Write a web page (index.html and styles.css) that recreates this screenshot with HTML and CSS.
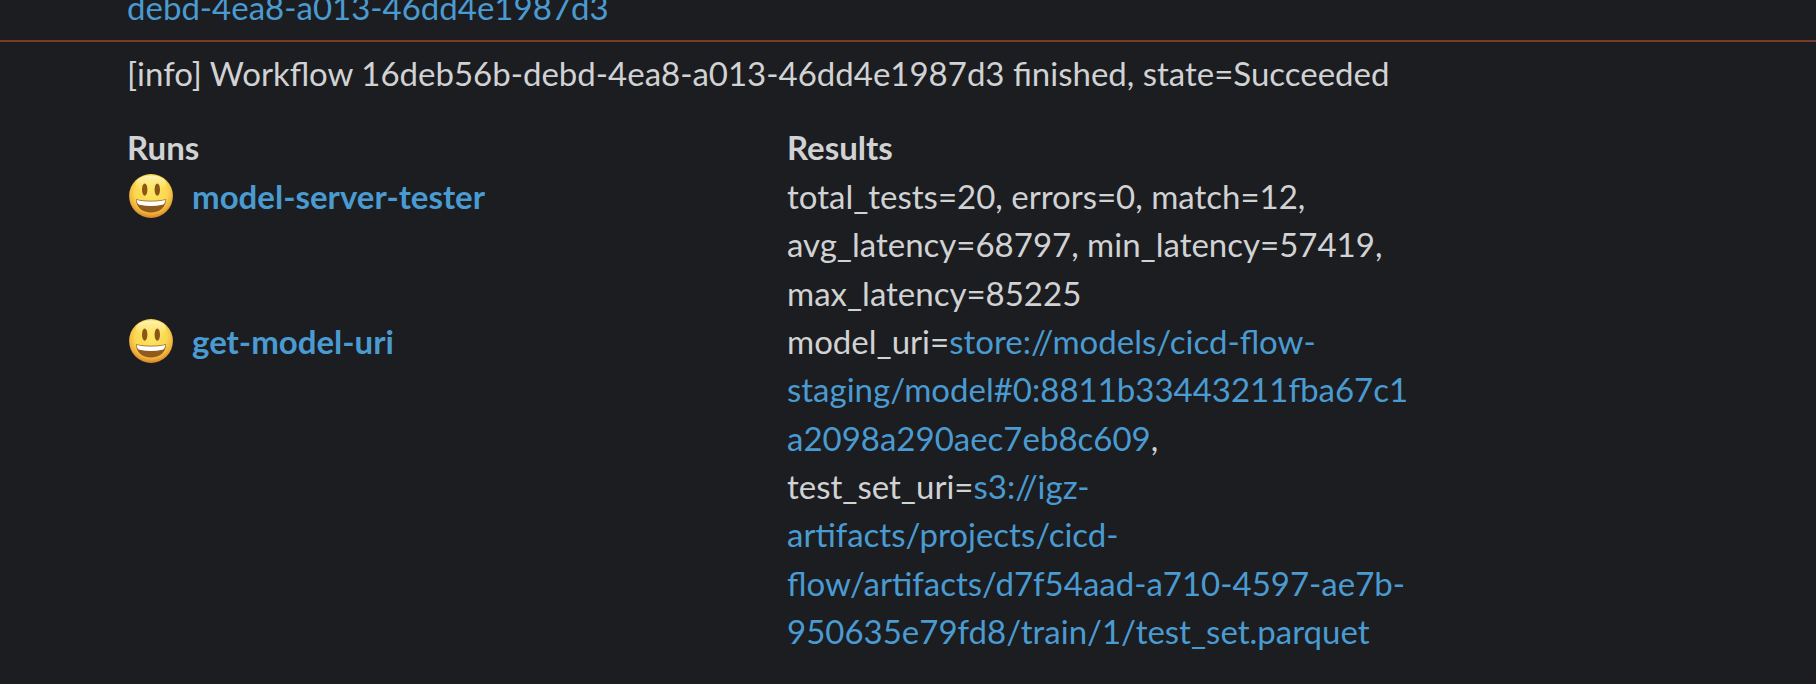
FILE: index.html
```html
<!DOCTYPE html>
<html lang="en">
<head>
<meta charset="utf-8">
<title>Workflow notifications</title>
<link rel="stylesheet" href="styles.css">
</head>
<body>
<svg class="defs" aria-hidden="true">
  <defs>
    <radialGradient id="face" cx="50%" cy="38%" r="62%">
      <stop offset="0" stop-color="#fde765"/>
      <stop offset=".6" stop-color="#fad750"/>
      <stop offset=".84" stop-color="#f0b03b"/>
      <stop offset="1" stop-color="#d58426"/>
    </radialGradient>
    <linearGradient id="shine" x1="0" y1="0" x2="0" y2="1">
      <stop offset="0" stop-color="#fffbd8" stop-opacity=".8"/>
      <stop offset="1" stop-color="#fff27e" stop-opacity="0"/>
    </linearGradient>
    <symbol id="smiley" viewBox="0 0 44 44">
      <circle cx="22" cy="22" r="21.9" fill="url(#face)"/>
      <ellipse cx="22" cy="9.5" rx="15" ry="8" fill="url(#shine)"/>
      <ellipse cx="15.7" cy="15.6" rx="2.7" ry="6.2" fill="#8a5618"/>
      <ellipse cx="28.3" cy="15.6" rx="2.7" ry="6.2" fill="#8a5618"/>
      <path d="M7 25.3Q22 28.3 37 25.3C36.8 33.5 30.5 38.5 22 38.5S7.2 33.5 7 25.3Z" fill="#8f5a1b"/>
      <path d="M7.6 25.9Q22 29 36.4 25.9Q36 30 33.5 30.7Q22 33.5 10.5 30.7Q8 30 7.6 25.9Z" fill="#fff"/>
    </symbol>
  </defs>
</svg>
<main class="log">
  <div class="message message-previous"><a class="link">debd-4ea8-a013-46dd4e1987d3</a></div>
  <section class="message">
    <p class="summary">[info] Workflow 16deb56b-debd-4ea8-a013-46dd4e1987d3 finished, state=Succeeded</p>
    <div class="fields heading"><strong>Runs</strong><strong>Results</strong></div>
    <div class="fields">
      <div class="run"><svg class="emoji"><use href="#smiley"/></svg><a class="link name">model-server-tester</a></div>
      <div class="result">total_tests=20, errors=0, match=12,<br>avg_latency=68797, min_latency=57419,<br>max_latency=85225</div>
      <div class="run"><svg class="emoji"><use href="#smiley"/></svg><a class="link name">get-model-uri</a></div>
      <div class="result">model_uri=<a class="link">store://models/cicd-flow-<br>staging/model#0:8811b33443211fba67c1<br>a2098a290aec7eb8c609</a>,<br>test_set_uri=<a class="link">s3://igz-<br>artifacts/projects/cicd-<br>flow/artifacts/d7f54aad-a710-4597-ae7b-<br>950635e79fd8/train/1/test_set.parquet</a></div>
    </div>
  </section>
</main>
</body>
</html>
```

FILE: styles.css
```css
body {
  margin: 0;
  height: 684px;
  overflow: hidden;
  background: #1c1d21;
  color: #d1d2d3;
  font: 33px/48.35px Lato, sans-serif;
}
.defs {
  display: block;
  width: 0;
  height: 0;
}
.log {
  display: flex;
  flex-direction: column;
}
.message {
  padding: 7px 0 0 127px;
  white-space: nowrap;
}
.message-previous {
  height: 40px;
  padding-top: 0;
  margin-top: -17px;
  padding-bottom: 17px;
  border-bottom: 2px solid #7a3b28;
}
.summary {
  margin: 0 0 25.5px;
}
.fields {
  display: grid;
  grid-template-columns: 660px 640px;
}
.heading {
  margin-bottom: 0.78px;
}
.link {
  color: #4a9bd1;
}
.run {
  display: flex;
  align-items: flex-start;
}
.emoji {
  width: 44px;
  height: 44px;
  margin: 2px 19px 0 2px;
}
.name {
  font-weight: 700;
}
```
